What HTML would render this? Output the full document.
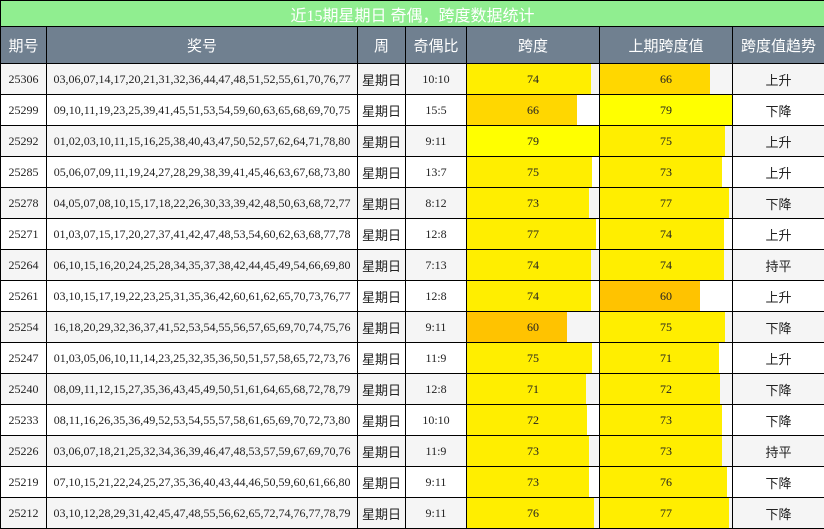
<!DOCTYPE html>
<html><head><meta charset="utf-8"><style>
body{margin:0;background:#fff;}
table{border-collapse:collapse;table-layout:fixed;width:824px;font-family:"Liberation Serif","Noto Sans CJK SC",serif;font-size:12px;color:#222;}
td,th{border:1px solid #000;padding:0;text-align:center;overflow:hidden;white-space:nowrap;}
.t td{background:#90EE90;color:#fff;height:25px;font-family:"Liberation Serif","Noto Sans CJK SC",sans-serif;font-size:16px;}
.h th{background:#708090;color:#fff;font-weight:normal;height:36px;font-family:"Liberation Serif","Noto Sans CJK SC",sans-serif;font-size:15px;}
tr.r td{height:30px;}
tr.r:nth-child(odd) td{background:#f5f5f5;}
tr.r:nth-child(even) td{background:#fff;}
.c{font-family:"Noto Sans CJK SC",sans-serif;font-size:13px;}
td.b{position:relative;}
td.b i{position:absolute;left:0;top:0;bottom:0;}
td.b span{position:relative;}
</style></head><body>
<table>
<colgroup><col style="width:46px"><col style="width:311px"><col style="width:48px"><col style="width:61px"><col style="width:133px"><col style="width:133px"><col style="width:92px"></colgroup>
<tr class="t"><td colspan="7">近15期星期日 奇偶，跨度数据统计</td></tr>
<tr class="h"><th>期号</th><th>奖号</th><th>周</th><th>奇偶比</th><th>跨度</th><th>上期跨度值</th><th>跨度值趋势</th></tr>
<tr class="r"><td>25306</td><td>03,06,07,14,17,20,21,31,32,36,44,47,48,51,52,55,61,70,76,77</td><td class="c">星期日</td><td>10:10</td><td class="b"><i style="width:93.7%;background:#FFEE00"></i><span>74</span></td><td class="b"><i style="width:83.5%;background:#FFD700"></i><span>66</span></td><td class="c">上升</td></tr>
<tr class="r"><td>25299</td><td>09,10,11,19,23,25,39,41,45,51,53,54,59,60,63,65,68,69,70,75</td><td class="c">星期日</td><td>15:5</td><td class="b"><i style="width:83.5%;background:#FFD700"></i><span>66</span></td><td class="b"><i style="width:100%;background:#FFFF00"></i><span>79</span></td><td class="c">下降</td></tr>
<tr class="r"><td>25292</td><td>01,02,03,10,11,15,16,25,38,40,43,47,50,52,57,62,64,71,78,80</td><td class="c">星期日</td><td>9:11</td><td class="b"><i style="width:100%;background:#FFFF00"></i><span>79</span></td><td class="b"><i style="width:94.9%;background:#FFEE00"></i><span>75</span></td><td class="c">上升</td></tr>
<tr class="r"><td>25285</td><td>05,06,07,09,11,19,24,27,28,29,38,39,41,45,46,63,67,68,73,80</td><td class="c">星期日</td><td>13:7</td><td class="b"><i style="width:94.9%;background:#FFEE00"></i><span>75</span></td><td class="b"><i style="width:92.4%;background:#FFEE00"></i><span>73</span></td><td class="c">上升</td></tr>
<tr class="r"><td>25278</td><td>04,05,07,08,10,15,17,18,22,26,30,33,39,42,48,50,63,68,72,77</td><td class="c">星期日</td><td>8:12</td><td class="b"><i style="width:92.4%;background:#FFEE00"></i><span>73</span></td><td class="b"><i style="width:97.5%;background:#FFEE00"></i><span>77</span></td><td class="c">下降</td></tr>
<tr class="r"><td>25271</td><td>01,03,07,15,17,20,27,37,41,42,47,48,53,54,60,62,63,68,77,78</td><td class="c">星期日</td><td>12:8</td><td class="b"><i style="width:97.5%;background:#FFEE00"></i><span>77</span></td><td class="b"><i style="width:93.7%;background:#FFEE00"></i><span>74</span></td><td class="c">上升</td></tr>
<tr class="r"><td>25264</td><td>06,10,15,16,20,24,25,28,34,35,37,38,42,44,45,49,54,66,69,80</td><td class="c">星期日</td><td>7:13</td><td class="b"><i style="width:93.7%;background:#FFEE00"></i><span>74</span></td><td class="b"><i style="width:93.7%;background:#FFEE00"></i><span>74</span></td><td class="c">持平</td></tr>
<tr class="r"><td>25261</td><td>03,10,15,17,19,22,23,25,31,35,36,42,60,61,62,65,70,73,76,77</td><td class="c">星期日</td><td>12:8</td><td class="b"><i style="width:93.7%;background:#FFEE00"></i><span>74</span></td><td class="b"><i style="width:75.9%;background:#FFC300"></i><span>60</span></td><td class="c">上升</td></tr>
<tr class="r"><td>25254</td><td>16,18,20,29,32,36,37,41,52,53,54,55,56,57,65,69,70,74,75,76</td><td class="c">星期日</td><td>9:11</td><td class="b"><i style="width:75.9%;background:#FFC300"></i><span>60</span></td><td class="b"><i style="width:94.9%;background:#FFEE00"></i><span>75</span></td><td class="c">下降</td></tr>
<tr class="r"><td>25247</td><td>01,03,05,06,10,11,14,23,25,32,35,36,50,51,57,58,65,72,73,76</td><td class="c">星期日</td><td>11:9</td><td class="b"><i style="width:94.9%;background:#FFEE00"></i><span>75</span></td><td class="b"><i style="width:89.9%;background:#FFEE00"></i><span>71</span></td><td class="c">上升</td></tr>
<tr class="r"><td>25240</td><td>08,09,11,12,15,27,35,36,43,45,49,50,51,61,64,65,68,72,78,79</td><td class="c">星期日</td><td>12:8</td><td class="b"><i style="width:89.9%;background:#FFEE00"></i><span>71</span></td><td class="b"><i style="width:91.1%;background:#FFEE00"></i><span>72</span></td><td class="c">下降</td></tr>
<tr class="r"><td>25233</td><td>08,11,16,26,35,36,49,52,53,54,55,57,58,61,65,69,70,72,73,80</td><td class="c">星期日</td><td>10:10</td><td class="b"><i style="width:91.1%;background:#FFEE00"></i><span>72</span></td><td class="b"><i style="width:92.4%;background:#FFEE00"></i><span>73</span></td><td class="c">下降</td></tr>
<tr class="r"><td>25226</td><td>03,06,07,18,21,25,32,34,36,39,46,47,48,53,57,59,67,69,70,76</td><td class="c">星期日</td><td>11:9</td><td class="b"><i style="width:92.4%;background:#FFEE00"></i><span>73</span></td><td class="b"><i style="width:92.4%;background:#FFEE00"></i><span>73</span></td><td class="c">持平</td></tr>
<tr class="r"><td>25219</td><td>07,10,15,21,22,24,25,27,35,36,40,43,44,46,50,59,60,61,66,80</td><td class="c">星期日</td><td>9:11</td><td class="b"><i style="width:92.4%;background:#FFEE00"></i><span>73</span></td><td class="b"><i style="width:96.2%;background:#FFEE00"></i><span>76</span></td><td class="c">下降</td></tr>
<tr class="r"><td>25212</td><td>03,10,12,28,29,31,42,45,47,48,55,56,62,65,72,74,76,77,78,79</td><td class="c">星期日</td><td>9:11</td><td class="b"><i style="width:96.2%;background:#FFEE00"></i><span>76</span></td><td class="b"><i style="width:97.5%;background:#FFEE00"></i><span>77</span></td><td class="c">下降</td></tr>
</table>
</body></html>
